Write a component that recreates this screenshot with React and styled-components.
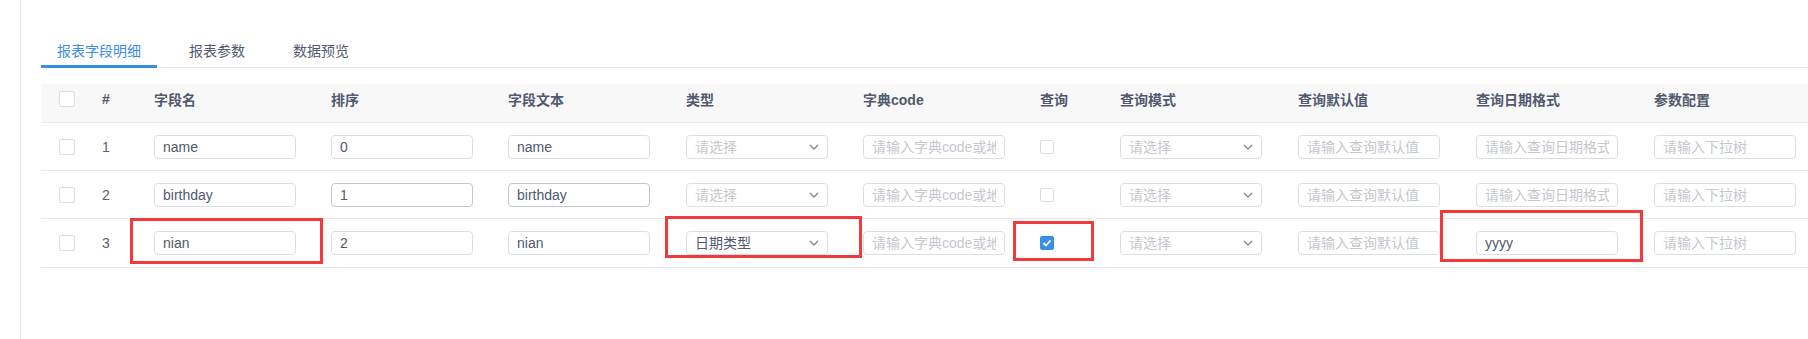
import React from "react";
import styled, { createGlobalStyle, css } from "styled-components";

const GlobalStyle = createGlobalStyle`
  html, body { margin: 0; padding: 0; background: #fff; }
  body {
    font-family: "Liberation Sans", "Noto Sans CJK SC", sans-serif;
    font-size: 14px;
    color: #515a6e;
  }
  * { box-sizing: border-box; }
`;

const Page = styled.div`
  width: 1808px;
  height: 339px;
  overflow: hidden;
  padding-left: 20px;
`;

const Card = styled.div`
  height: 100%;
  border-left: 1px solid #e6e8eb;
  padding: 31px 0 0 20px;
`;

const TabNav = styled.div`
  display: flex;
  border-bottom: 1px solid #e4e7ed;
  margin-bottom: 16px;
  width: 1900px;
`;

const Tab = styled.div`
  position: relative;
  padding: 10px 16px 6px;
  margin-right: 16px;
  line-height: 20px;
  font-size: 14px;
  color: ${(p) => (p.$active ? "#3a8ee6" : "#515a6e")};
  ${(p) =>
    p.$active &&
    css`
      &::after {
        content: "";
        position: absolute;
        left: 0;
        right: 0;
        bottom: -1px;
        height: 3px;
        background: #3a8ee6;
      }
    `}
`;

const COLS = "45px 52px 177px 177px 178px 177px 177px 80px 178px 178px 178px 178px";

const Table = styled.div`
  width: 1900px;
  border-bottom: 1px solid #e8eaec;
`;

const Row = styled.div`
  display: grid;
  grid-template-columns: ${COLS};
  height: ${(p) => (p.$head ? "39px" : "48px")};
  background: ${(p) => (p.$head ? "#f8f8f9" : "#fff")};
  border-bottom: ${(p) => (p.$last ? "none" : "1px solid #e8eaec")};
`;

const Cell = styled.div`
  position: relative;
  display: flex;
  align-items: center;
  padding-left: ${(p) => (p.$first ? "18px" : "16px")};
  white-space: nowrap;
`;

const HeadText = styled.span`
  font-weight: 700;
  color: #515a6e;
  font-size: 14px;
`;

const NumText = styled.span`
  color: #606266;
  font-size: 14px;
`;

const CheckBox = styled.span`
  display: inline-flex;
  align-items: center;
  justify-content: center;
  width: ${(p) => (p.$small ? "14px" : "16px")};
  height: ${(p) => (p.$small ? "14px" : "16px")};
  border: 1px solid ${(p) => (p.$checked ? "#3a8ee6" : "#dcdee2")};
  border-radius: 2px;
  background: ${(p) => (p.$checked ? "#3a8ee6" : "#fff")};
`;

const Field = styled.div`
  display: flex;
  align-items: center;
  justify-content: space-between;
  width: 142px;
  height: 24px;
  padding: 0 8px;
  border: 1px solid ${(p) => (p.$dark ? "#c3c6cc" : "#dcdee2")};
  border-radius: 4px;
  background: #fff;
  font-size: 14px;
  overflow: hidden;
`;

const FieldText = styled.span`
  color: ${(p) => (p.$placeholder ? "#c5c8ce" : "#515a6e")};
  overflow: hidden;
  white-space: nowrap;
  line-height: 22px;
`;

const Highlight = styled.div`
  position: absolute;
  border: 3px solid #f23a3a;
  pointer-events: none;
`;

const Chevron = () => (
  <svg width="10" height="6" viewBox="0 0 10 6" fill="none">
    <polyline points="1,1 5,5 9,1" stroke="#808695" strokeWidth="1.3" />
  </svg>
);

const Check = () => (
  <svg width="10" height="8" viewBox="0 0 10 8" fill="none">
    <polyline points="1.5,4 4,6.5 8.5,1.5" stroke="#fff" strokeWidth="1.8" />
  </svg>
);

const Input = ({ value, placeholder, dark }) => (
  <Field $dark={dark}>
    <FieldText $placeholder={!value}>{value || placeholder}</FieldText>
  </Field>
);

const Select = ({ value }) => (
  <Field>
    <FieldText $placeholder={!value}>{value || "请选择"}</FieldText>
    <Chevron />
  </Field>
);

const headers = ["字段名", "排序", "字段文本", "类型", "字典code", "查询", "查询模式", "查询默认值", "查询日期格式", "参数配置"];

const rows = [
  { n: 1, name: "name", order: "0", text: "name", type: "", query: false, date: "" },
  { n: 2, name: "birthday", order: "1", text: "birthday", type: "", query: false, date: "", dark: true },
  { n: 3, name: "nian", order: "2", text: "nian", type: "日期类型", query: true, date: "yyyy", mark: true },
];

const Box = ({ on, l, t, w, h }) =>
  on ? <Highlight style={{ left: l, top: t, width: w, height: h }} /> : null;

export default function App() {
  return (
    <Page>
      <GlobalStyle />
      <Card>
        <TabNav>
          <Tab $active>报表字段明细</Tab>
          <Tab>报表参数</Tab>
          <Tab>数据预览</Tab>
        </TabNav>
        <Table>
          <Row $head>
            <Cell $first>
              <CheckBox />
            </Cell>
            <Cell>
              <HeadText>#</HeadText>
            </Cell>
            {headers.map((h) => (
              <Cell key={h}>
                <HeadText>{h}</HeadText>
              </Cell>
            ))}
            <Cell />
          </Row>
          {rows.map((r, i) => (
            <Row key={r.n} $last={i === rows.length - 1}>
              <Cell $first>
                <CheckBox />
              </Cell>
              <Cell>
                <NumText>{r.n}</NumText>
              </Cell>
              <Cell>
                <Input value={r.name} />
                <Box on={r.mark} l={-8} t={-1} w={193} h={46} />
              </Cell>
              <Cell>
                <Input value={r.order} dark={r.dark} />
              </Cell>
              <Cell>
                <Input value={r.text} dark={r.dark} />
              </Cell>
              <Cell>
                <Select value={r.type} />
                <Box on={r.mark} l={-5} t={-3} w={197} h={42} />
              </Cell>
              <Cell>
                <Input placeholder="请输入字典code或地址" />
              </Cell>
              <Cell>
                <CheckBox $small $checked={r.query}>
                  {r.query && <Check />}
                </CheckBox>
                <Box on={r.mark} l={-11} t={2} w={81} h={40} />
              </Cell>
              <Cell>
                <Select />
              </Cell>
              <Cell>
                <Input placeholder="请输入查询默认值" />
              </Cell>
              <Cell>
                <Input value={r.date} placeholder="请输入查询日期格式" />
                <Box on={r.mark} l={-20} t={-9} w={203} h={52} />
              </Cell>
              <Cell>
                <Input placeholder="请输入下拉树" />
              </Cell>
            </Row>
          ))}
        </Table>
      </Card>
    </Page>
  );
}
